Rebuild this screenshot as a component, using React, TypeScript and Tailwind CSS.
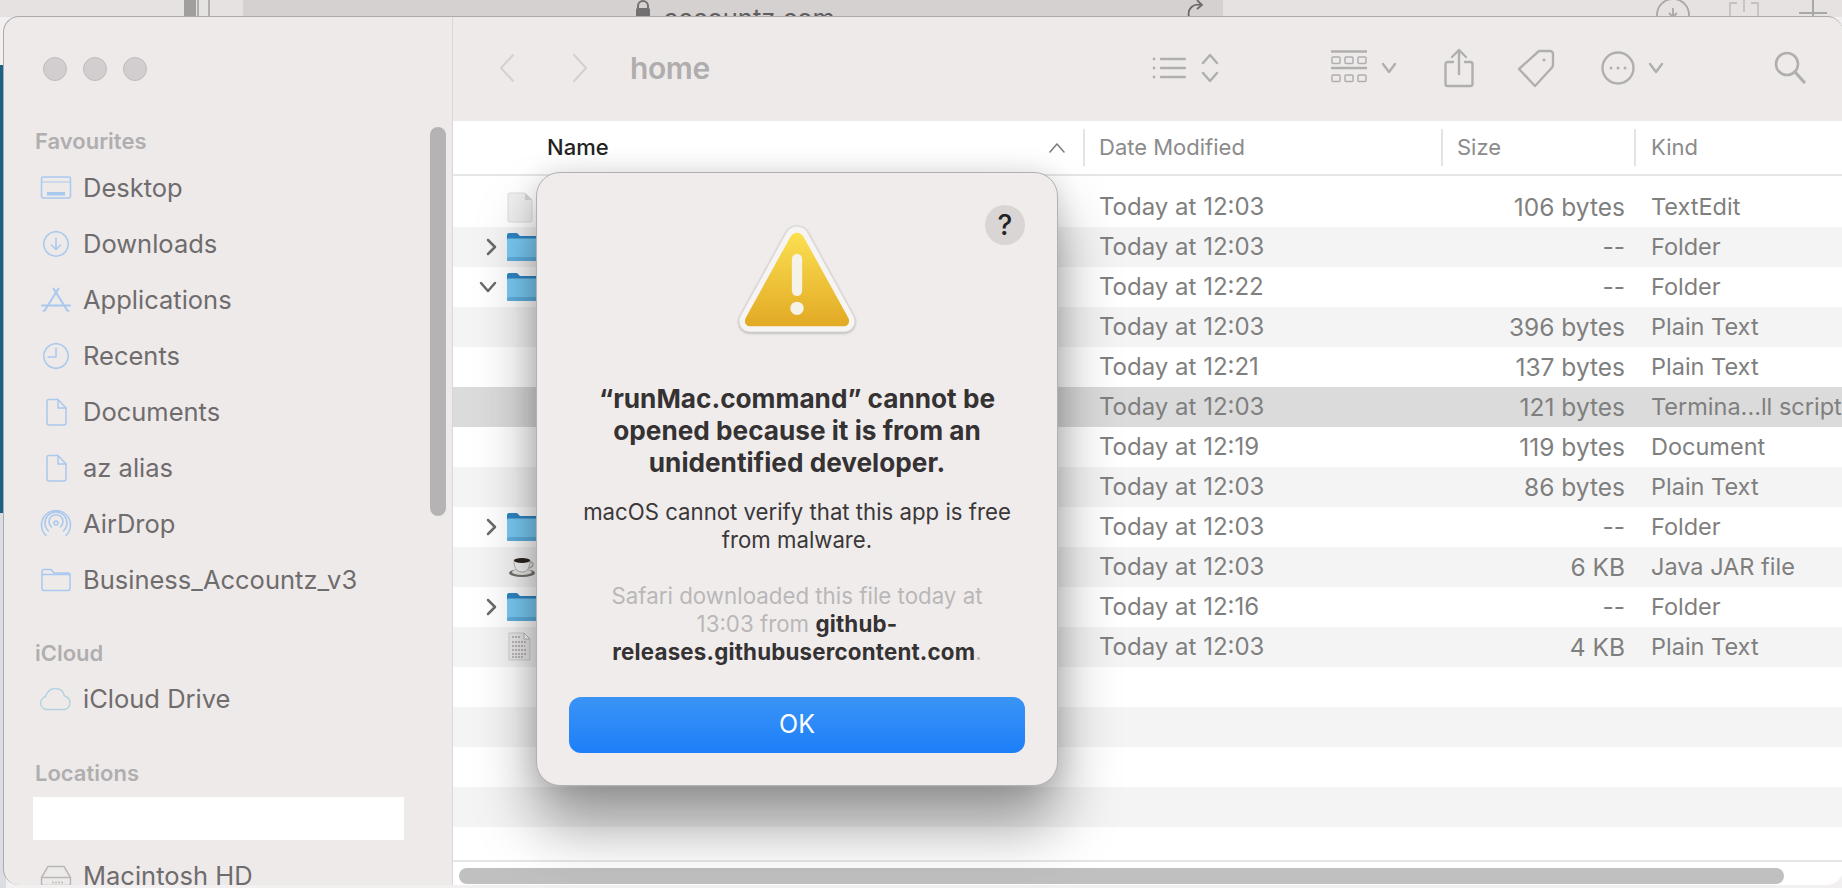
import React from "react";

const font = { fontFamily: "Inter, 'Liberation Sans', sans-serif" };

function SideIcon({ name }: { name: string }) {
  const c = "#a9c8ee";
  const common = { fill: "none", stroke: c, strokeWidth: 1.5, strokeLinecap: "round" as const, strokeLinejoin: "round" as const };
  if (name === "desktop")
    return (
      <svg width="32" height="26" viewBox="0 0 32 26" {...common}>
        <rect x="1.500" y="2" width="29" height="21" rx="2" />
        <path d="M2 7h28" strokeWidth="1" />
        <rect x="7" y="17" width="18" height="3.500" fill={c} stroke="none" />
      </svg>
    );
  if (name === "downloads")
    return (
      <svg width="32" height="28" viewBox="0 0 32 28" {...common}>
        <circle cx="16" cy="14" r="12.200" />
        <path d="M16 8v11M11.500 15l4.500 4.500 4.500-4.500" />
      </svg>
    );
  if (name === "apps")
    return (
      <svg width="32" height="26" viewBox="0 0 32 26" {...common} strokeWidth="2">
        <path d="M13.500 1.500L27 23M18.500 1.500L5 23M2 18.500h28" />
        <path d="M3.500 24l1.500-1M28.500 24l-1.500-1" />
      </svg>
    );
  if (name === "recents")
    return (
      <svg width="32" height="28" viewBox="0 0 32 28" {...common}>
        <circle cx="16" cy="14" r="12.200" />
        <path d="M16 6v9H8" />
      </svg>
    );
  if (name === "doc")
    return (
      <svg width="32" height="28" viewBox="0 0 32 28" {...common}>
        <path d="M7 3.500a2 2 0 0 1 2-2h9l8 8.500v15a2 2 0 0 1-2 2H9a2 2 0 0 1-2-2z" />
        <path d="M18 1.500v8.500h8" />
      </svg>
    );
  if (name === "airdrop")
    return (
      <svg width="32" height="28" viewBox="0 0 32 28" {...common}>
        <circle cx="16" cy="13" r="2" />
        <path d="M11.500 18a7 7 0 1 1 9 0M8.500 22a11 11 0 1 1 15 0M6 26.500a14.500 14.500 0 1 1 20 0" transform="translate(0 -1)" />
      </svg>
    );
  if (name === "folder")
    return (
      <svg width="32" height="24" viewBox="0 0 32 24" {...common}>
        <path d="M2 5V3.500a2 2 0 0 1 2-2h7l3 3.500h14a2 2 0 0 1 2 2v13.500a2 2 0 0 1-2 2H4a2 2 0 0 1-2-2z" />
        <path d="M2 6.500h28" />
      </svg>
    );
  if (name === "cloud")
    return (
      <svg width="34" height="24" viewBox="0 0 34 24" fill="none" stroke="#b3d4df" strokeWidth="1.500">
        <path d="M8 22.500a6.500 6.500 0 0 1-1.500-12.800C8 4.500 12 1.500 16.500 1.500c4.500 0 8 3 9 7.500a7 7 0 0 1 0.500 13.500z" />
      </svg>
    );
  return (
    <svg width="32" height="22" viewBox="0 0 32 22" fill="none" stroke="#b9b7b8" strokeWidth="1.500">
      <path d="M8 1.500h16l6.500 11v6a2 2 0 0 1-2 2h-25a2 2 0 0 1-2-2v-6z" />
      <path d="M2 12.500h28M13 16.500v2M16 16.500v2M19 16.500v2M22 16.500v2" />
    </svg>
  );
}

function SideRow({ icon, label }: { icon: string; label: string }) {
  return (
    <div className="flex items-center h-14">
      <div className="w-[41px] mr-[7px] flex justify-center items-center shrink-0">
        <SideIcon name={icon} />
      </div>
      <span className="text-[25.500px] leading-none text-[#6e6c6d] whitespace-nowrap">{label}</span>
    </div>
  );
}

function SideHead({ children }: { children: React.ReactNode }) {
  return <div className="text-[22px] leading-6 font-semibold text-[#b0aeaf] -mt-px">{children}</div>;
}

const rows: { date: string; size: string; kind: string; icon?: string; arrow?: string; sel?: boolean }[] = [
  { date: "Today at 12:03", size: "106 bytes", kind: "TextEdit", icon: "blank" },
  { date: "Today at 12:03", size: "--", kind: "Folder", icon: "folder", arrow: "right" },
  { date: "Today at 12:22", size: "--", kind: "Folder", icon: "folder", arrow: "down" },
  { date: "Today at 12:03", size: "396 bytes", kind: "Plain Text" },
  { date: "Today at 12:21", size: "137 bytes", kind: "Plain Text" },
  { date: "Today at 12:03", size: "121 bytes", kind: "Termina...ll script", sel: true },
  { date: "Today at 12:19", size: "119 bytes", kind: "Document" },
  { date: "Today at 12:03", size: "86 bytes", kind: "Plain Text" },
  { date: "Today at 12:03", size: "--", kind: "Folder", icon: "folder", arrow: "right" },
  { date: "Today at 12:03", size: "6 KB", kind: "Java JAR file", icon: "java" },
  { date: "Today at 12:16", size: "--", kind: "Folder", icon: "folder", arrow: "right" },
  { date: "Today at 12:03", size: "4 KB", kind: "Plain Text", icon: "text" },
  { date: "", size: "", kind: "" },
  { date: "", size: "", kind: "" },
  { date: "", size: "", kind: "" },
  { date: "", size: "", kind: "" },
];

function RowIcon({ name }: { name?: string }) {
  if (name === "folder")
    return (
      <svg width="30" height="30" viewBox="0 0 30 30">
        <path d="M0 3a2 2 0 0 1 2-2h8l3 3h17v25H2a2 2 0 0 1-2-2z" fill="#2f86c4" />
        <rect x="0" y="6.500" width="30" height="22.500" rx="1.500" fill="#7acbf5" />
        <rect x="0" y="25" width="30" height="4" rx="1.500" fill="#60b0e2" />
      </svg>
    );
  if (name === "blank")
    return (
      <svg width="27" height="31" viewBox="0 0 27 31">
        <path d="M2 1h16l7 7v20a2 2 0 0 1-2 2H3a2 2 0 0 1-2-2V2z" fill="#f0efef" stroke="#dedddd" />
        <path d="M18 1v7h7z" fill="#d4d4d4" />
      </svg>
    );
  if (name === "java")
    return (
      <svg width="28" height="22" viewBox="0 0 28 22" className="ml-[1px]">
        <ellipse cx="14" cy="17" rx="13" ry="4" fill="#77736f" />
        <ellipse cx="14" cy="16" rx="10" ry="3" fill="#e8e8e8" />
        <path d="M6 4h16c0 7-2 12-8 12S6 11 6 4z" fill="#f6f6f6" stroke="#a5a5a5" strokeWidth="0.800" />
        <ellipse cx="14" cy="4.500" rx="8" ry="2.500" fill="#2c2420" />
        <path d="M22 6c4 0 4 5-1 6" fill="none" stroke="#b5b5b5" strokeWidth="1.500" />
      </svg>
    );
  if (name === "text")
    return (
      <svg width="26" height="30" viewBox="0 0 26 30" fill="none">
        <path d="M2 1h15l6 6v21H2z" fill="#eceaea" stroke="#cfcfcf" />
        <path d="M17 1v6h6z" fill="#ffffff" stroke="#9a9a9a" strokeWidth="0.600" />
        <path d="M5 5h8M5 10h15M5 14h13M5 18h15M5 22h14M5 25h11" stroke="#a9a9a9" strokeWidth="1.500" strokeDasharray="2 1" />
      </svg>
    );
  return null;
}

function Arrow({ dir }: { dir?: string }) {
  if (dir === "right")
    return (
      <svg width="12" height="18" viewBox="0 0 12 18" fill="none" stroke="#6a6a6a" strokeWidth="2.500" strokeLinecap="round" strokeLinejoin="round">
        <path d="M3 2l7 7-7 7" />
      </svg>
    );
  if (dir === "down")
    return (
      <svg width="18" height="12" viewBox="0 0 18 12" fill="none" stroke="#6a6a6a" strokeWidth="2.500" strokeLinecap="round" strokeLinejoin="round">
        <path d="M2 2l7 8 7-8" />
      </svg>
    );
  return null;
}

function ToolStroke({ w, h, vb, children, sw = 2.400 }: { w: number; h: number; vb: string; children: React.ReactNode; sw?: number }) {
  return (
    <svg width={w} height={h} viewBox={vb} fill="none" stroke="#b0aeaf" strokeWidth={sw} strokeLinecap="round" strokeLinejoin="round">
      {children}
    </svg>
  );
}

function Toolbar() {
  return (
    <div className="h-[105px] shrink-0 flex items-center border-b border-[#dcd9d9] pb-[2px]">
      <div className="w-[73px] ml-[45px] shrink-0">
        <ToolStroke w={18} h={30} vb="0 0 18 30" sw={2}><path d="M15 2L3 15l12 13" stroke="#d2d0d0" /></ToolStroke>
      </div>
      <div className="w-[59px] shrink-0">
        <ToolStroke w={18} h={30} vb="0 0 18 30" sw={2}><path d="M3 2l12 13L3 28" stroke="#d2d0d0" /></ToolStroke>
      </div>
      <div className="text-[30px] leading-none font-semibold text-[#afadae] w-[522px] shrink-0 tracking-[-0.4px]">home</div>
      <div className="flex items-center w-[179px] shrink-0">
        <ToolStroke w={34} h={28} vb="0 0 34 28">
          <circle cx="2" cy="5" r="1.400" fill="#b0aeaf" stroke="none" />
          <circle cx="2" cy="14" r="1.400" fill="#b0aeaf" stroke="none" />
          <circle cx="2" cy="23" r="1.400" fill="#b0aeaf" stroke="none" />
          <path d="M9 5h24M9 14h24M9 23h24" />
        </ToolStroke>
        <div className="ml-[15px]">
          <ToolStroke w={18} h={30} vb="0 0 18 30"><path d="M2 10l7-8 7 8M2 20l7 8 7-8" /></ToolStroke>
        </div>
      </div>
      <div className="flex items-center w-[113px] shrink-0">
        <ToolStroke w={36} h={36} vb="0 0 36 36" sw={1.500}>
          <path d="M0.500 1.500h35M0.500 18h35" strokeWidth="2.400" />
          <rect x="1" y="7" width="8" height="6.500" rx="1" />
          <rect x="14" y="7" width="8" height="6.500" rx="1" />
          <rect x="27" y="7" width="8" height="6.500" rx="1" />
          <rect x="1" y="25" width="8" height="6.500" rx="1" />
          <rect x="14" y="25" width="8" height="6.500" rx="1" />
          <rect x="27" y="25" width="8" height="6.500" rx="1" />
        </ToolStroke>
        <div className="ml-[14px]">
          <ToolStroke w={16} h={12} vb="0 0 16 12"><path d="M2 2l6 8 6-8" /></ToolStroke>
        </div>
      </div>
      <div className="w-[73px] shrink-0">
        <ToolStroke w={30} h={40} vb="0 0 30 40">
          <path d="M9 14H3.500a2 2 0 0 0-2 2v20a2 2 0 0 0 2 2h23a2 2 0 0 0 2-2V16a2 2 0 0 0-2-2H21M15 26V2M8 9l7-7 7 7" />
        </ToolStroke>
      </div>
      <div className="w-[84px] shrink-0">
        <ToolStroke w={38} h={40} vb="0 0 38 40">
          <path d="M22 3h11a3 3 0 0 1 3 3v11a5 5 0 0 1-1 2.500L18 38 2 21 22 3z" />
          <circle cx="27" cy="12" r="1.500" fill="#b0aeaf" stroke="none" />
        </ToolStroke>
      </div>
      <div className="flex items-center w-[173px] shrink-0">
        <ToolStroke w={34} h={34} vb="0 0 34 34">
          <circle cx="17" cy="17" r="15.500" />
          <circle cx="10" cy="17" r="1.500" fill="#b0aeaf" stroke="none" />
          <circle cx="17" cy="17" r="1.500" fill="#b0aeaf" stroke="none" />
          <circle cx="24" cy="17" r="1.500" fill="#b0aeaf" stroke="none" />
        </ToolStroke>
        <div className="ml-[13px]">
          <ToolStroke w={16} h={12} vb="0 0 16 12"><path d="M2 2l6 8 6-8" /></ToolStroke>
        </div>
      </div>
      <ToolStroke w={32} h={34} vb="0 0 32 34" sw={2.600}>
        <circle cx="13" cy="13" r="11" />
        <path d="M21 21l9 10" strokeWidth="3.200" />
      </ToolStroke>
    </div>
  );
}

function HeaderDivider() {
  return <div className="w-[2px] h-[37px] bg-[#e4e4e4] shrink-0" />;
}

function ListHeader() {
  return (
    <div className="h-[55px] shrink-0 flex items-center border-b-2 border-[#e6e6e6] bg-white text-[22px] text-[#8b8b8b] -mt-px">
      <div className="w-[94px] shrink-0" />
      <div className="w-[528px] shrink-0 font-medium text-[#242424] flex items-center justify-between pr-[10px]">
        <span>Name</span>
        <svg width="16" height="10" viewBox="0 0 16 10" fill="none" stroke="#7b7b7b" strokeWidth="1.500" strokeLinecap="round">
          <path d="M1 9l7-8 7 8" />
        </svg>
      </div>
      <div className="w-[8px] shrink-0" />
      <HeaderDivider />
      <div className="w-[356px] pl-[14px] shrink-0">Date Modified</div>
      <HeaderDivider />
      <div className="w-[191px] pl-[14px] shrink-0">Size</div>
      <HeaderDivider />
      <div className="pl-[15px]">Kind</div>
    </div>
  );
}

function Row({ r, i }: { r: (typeof rows)[number]; i: number }) {
  const bg = r.sel ? "bg-[#dbdbdb]" : i % 2 === 1 ? "bg-[#f4f4f4]" : "bg-white";
  return (
    <div className={`h-10 flex items-center shrink-0 text-[#7f7f7f] whitespace-nowrap ${bg}`}>
      <div className="w-[54px] shrink-0 flex justify-end pr-[10px]"><Arrow dir={r.arrow} /></div>
      <div className="w-[30px] shrink-0 flex"><RowIcon name={r.icon} /></div>
      <div className="w-[562px] shrink-0" />
      <div className="w-[326px] shrink-0 text-[24px]">{r.date}</div>
      <div className="w-[200px] shrink-0 text-right text-[24.500px]">{r.size}</div>
      <div className="pl-[26px] text-[23.500px]">{r.kind}</div>
    </div>
  );
}

function Warning() {
  return (
    <svg width="124" height="111" viewBox="0 0 120 108" className="drop-shadow-[0_1px_1px_rgba(0,0,0,0.25)]">
      <defs>
        <linearGradient id="w" x1="0" y1="0" x2="0" y2="1">
          <stop offset="0" stopColor="#fbe050" />
          <stop offset="1" stopColor="#e2a925" />
        </linearGradient>
      </defs>
      <path d="M60 3c5 0 9 3 11 7l44 80c4 8-1 16-9 16H14C6 106 1 98 5 90L49 10c2-4 6-7 11-7z" fill="#f7f5f3" stroke="#dad7d4" strokeWidth="1" />
      <path d="M60 9.500c3 0 5.500 2 7 5l43 78c2 5-1 8-5 8H15c-4 0-7-3-5-8l43-78c1.500-3 4-5 7-5z" fill="url(#w)" />
      <rect x="55" y="30" width="10" height="41" rx="5" fill="#f5f2e8" />
      <circle cx="60" cy="83" r="6.500" fill="#f5f2e8" />
    </svg>
  );
}

function Dialog() {
  return (
    <div className="absolute left-[536px] top-[172px] w-[522px] h-[614px] rounded-[24px] bg-[#f0ecec] border border-[#b3b0b0] shadow-[0_40px_60px_0_rgba(0,0,0,0.38),0_0_26px_0_rgba(0,0,0,0.12)] flex flex-col items-center text-center">
      <div className="absolute right-[32px] top-[32px] w-10 h-10 rounded-full bg-[#d9d5d5] flex items-center justify-center text-[28px] font-medium text-[#222]">?</div>
      <div className="mt-[50px] h-[111px]"><Warning /></div>
      <div className="mt-[49px] w-[450px] text-[26.200px] leading-[32px] font-bold text-[#353233]">
        “runMac.command” cannot be opened because it is from an unidentified developer.
      </div>
      <div className="mt-[19px] w-[450px] text-[22.200px] leading-[28px] text-[#3a3839]">
        macOS cannot verify that this app is free from malware.
      </div>
      <div className="mt-[28px] w-[420px] text-[22.300px] leading-[28px] text-[#bab7b7]">
        Safari downloaded this file today at 13:03 from <span className="font-bold tracking-[0.2px] text-[#353233]">github-releases.githubusercontent.com</span>.
      </div>
      <div className="mt-[31px] w-[456px] h-[56px] rounded-[12px] bg-gradient-to-b from-[#3a94f6] to-[#1c7ff9] flex items-center justify-center text-[25px] text-white">OK</div>
    </div>
  );
}

function BrowserStrip() {
  return (
    <div className="h-[17px] bg-[#e6e2e2] flex overflow-hidden relative">
      <div className="w-[184px] shrink-0" />
      <svg width="26" height="17" viewBox="0 0 26 17" className="shrink-0">
        <rect x="0" y="-4" width="12" height="21" fill="#a19e9e" />
        <path d="M14 17V-2h10a1.500 1.500 0 0 1 1 1.500V17" fill="none" stroke="#a19e9e" strokeWidth="1.500" />
      </svg>
      <div className="w-[33px] shrink-0" />
      <div className="w-[980px] shrink-0 bg-[#d5d1d1] flex items-start overflow-hidden h-[17px]">
        <div className="w-[421px] shrink-0 flex justify-end pr-[12px]">
          <svg width="18" height="17" viewBox="0 0 18 17">
            <path d="M4 8V6a5 5 0 0 1 10 0v2" fill="none" stroke="#737071" strokeWidth="2" />
            <rect x="2" y="8" width="14" height="9" rx="1.500" fill="#737071" />
          </svg>
        </div>
        <span className="text-[25.500px] leading-[35px] text-[#5f5d5e]">accountz.com</span>
        <div className="flex-1" />
        <svg width="22" height="17" viewBox="0 0 22 17" fill="none" stroke="#6c6a6b" strokeWidth="1.800" className="mr-[16px] shrink-0">
          <path d="M4 17C2 9 8 3 16 5M12 0l5 5-5 4" />
        </svg>
      </div>
      <div className="flex-1 relative">
        <div className="flex items-start h-[17px]">
          <div className="w-[432px] shrink-0" />
          <svg width="36" height="17" viewBox="0 0 36 17" fill="none" stroke="#a9a7a7" strokeWidth="1.800" className="shrink-0">
            <circle cx="18" cy="15" r="16" />
            <path d="M18 8v9M14 13l4 4 4-4" />
          </svg>
          <div className="w-[38px] shrink-0" />
          <svg width="30" height="17" viewBox="0 0 30 17" fill="none" stroke="#c4c1c1" strokeWidth="1.800" className="shrink-0">
            <path d="M8 3H1v14M22 3h7v14M15 0v12" />
          </svg>
          <div className="w-[40px] shrink-0" />
          <svg width="28" height="17" viewBox="0 0 28 17" fill="none" stroke="#a9a7a7" strokeWidth="2" className="shrink-0">
            <path d="M14 0v17M0 13h28" />
          </svg>
        </div>
      </div>
    </div>
  );
}

export default function App() {
  return (
    <div className="relative w-[1842px] h-[888px] overflow-hidden bg-[#f2f0f0]" style={font}>
      <BrowserStrip />
      <div className="absolute left-0 top-[65px] w-[6px] h-[448px] bg-[#1c6285]" />
      <div className="absolute left-0 top-[513px] w-[6px] h-[375px] bg-[#dcdde2]" />
      <div className="absolute left-[3px] top-[16px] w-[1840px] h-[869px] rounded-[16px] overflow-hidden border-t border-l border-[#adaaaa] bg-[#eeeaea] flex">
        <div className="w-[449px] shrink-0 border-r border-[#dad7d7] relative overflow-hidden pl-[31px]">
          <div className="flex gap-[16px] pt-[40px] pl-[8px]">
            <div className="w-6 h-6 rounded-full bg-[#d2cecf] border border-[#bebbbb]" />
            <div className="w-6 h-6 rounded-full bg-[#d2cecf] border border-[#bebbbb]" />
            <div className="w-6 h-6 rounded-full bg-[#d2cecf] border border-[#bebbbb]" />
          </div>
          <div className="absolute left-[426px] top-[110px] w-4 h-[389px] rounded-full bg-[#b5b3b4]" />
          <div className="mt-[49px]"><SideHead>Favourites</SideHead></div>
          <div className="mt-[7px]">
            <SideRow icon="desktop" label="Desktop" />
            <SideRow icon="downloads" label="Downloads" />
            <SideRow icon="apps" label="Applications" />
            <SideRow icon="recents" label="Recents" />
            <SideRow icon="doc" label="Documents" />
            <SideRow icon="doc" label="az alias" />
            <SideRow icon="airdrop" label="AirDrop" />
            <SideRow icon="folder" label="Business_Accountz_v3" />
          </div>
          <div className="mt-[34px]"><SideHead>iCloud</SideHead></div>
          <div className="mt-[6px]"><SideRow icon="cloud" label="iCloud Drive" /></div>
          <div className="mt-[35px]"><SideHead>Locations</SideHead></div>
          <div className="mt-[12px] h-[43px] w-[371px] -ml-[2px] bg-white" />
          <div className="mt-[8px]"><SideRow icon="hd" label="Macintosh HD" /></div>
        </div>
        <div className="flex-1 min-w-0 flex flex-col overflow-hidden">
          <Toolbar />
          <ListHeader />
          <div className="h-[11px] shrink-0 bg-white" />
          <div className="flex-1 min-h-0 overflow-hidden bg-white">
            {rows.map((r, i) => <Row key={i} r={r} i={i} />)}
          </div>
          <div className="h-[25px] shrink-0 bg-white border-t-2 border-[#e6e6e6] pt-[6px] pl-[6px]">
            <div className="w-[1325px] h-[16px] rounded-full bg-[#c0c0c0]" />
          </div>
        </div>
      </div>
      <Dialog />
    </div>
  );
}
